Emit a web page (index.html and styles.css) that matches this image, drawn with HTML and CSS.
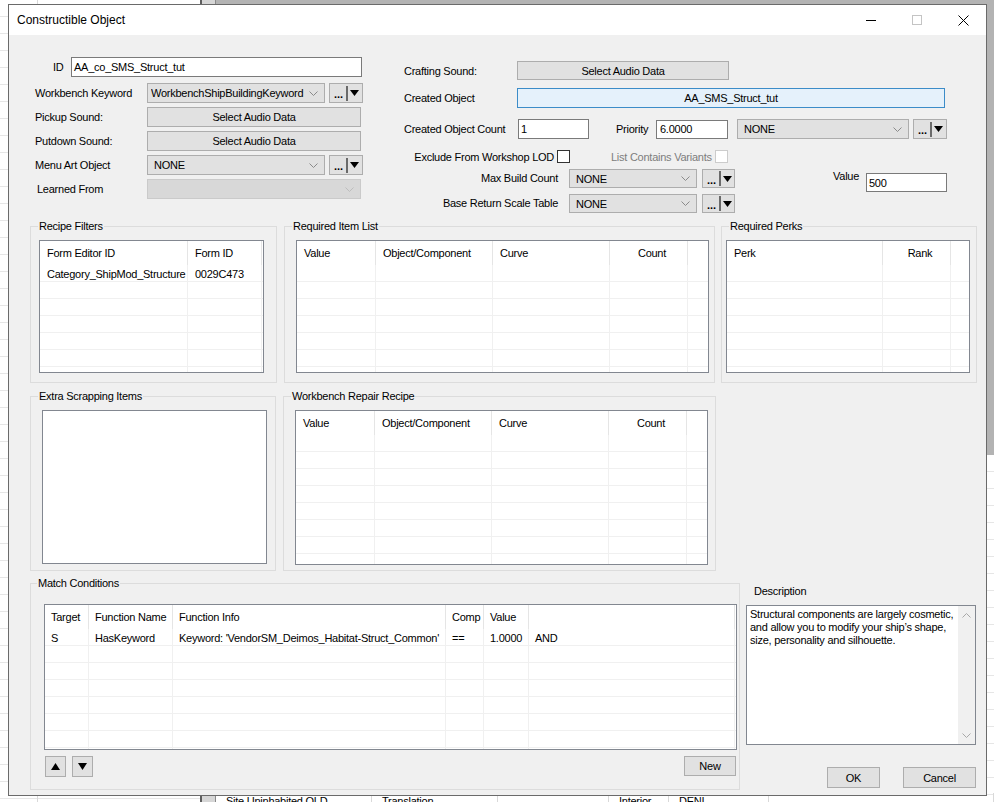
FILE: index.html
```html
<!DOCTYPE html>
<html>
<head>
<meta charset="utf-8">
<title>Constructible Object</title>
<link rel="stylesheet" href="styles.css">
</head>
<body>
<div class="desk">
  <div class="bg-left"></div>
  <div class="bg-split"></div>
  <div class="bg-main">
    <div class="bg-gray"></div>
    <div class="bg-list">
      <div class="bg-row"><span>Site Uninhabited OLD</span><span>Translation</span><span></span><span>Interior</span><span>DENI</span><span></span></div>
    </div>
  </div>

  <div class="window">
    <div class="titlebar">
      <div class="title">Constructible Object</div>
      <div class="tb-btn"><span class="tb-min"></span></div>
      <div class="tb-btn"><span class="tb-max"></span></div>
      <div class="tb-btn"><svg width="11" height="11" viewBox="0 0 11 11"><path d="M0.5 0.5L10.5 10.5M10.5 0.5L0.5 10.5" stroke="#000" stroke-width="1" fill="none"/></svg></div>
    </div>

    <div class="client">
      <div class="top">
        <div class="col-left">
          <div class="row-id"><span class="lbl-id">ID</span><div class="input w-id">AA_co_SMS_Struct_tut</div></div>
          <div class="frows">
            <div class="frow"><span class="flabel">Workbench Keyword</span>
              <div class="combo w-combo-l pl-s"><span class="ctext">WorkbenchShipBuildingKeyword</span><svg class="chev" width="9" height="5" viewBox="0 0 9 5"><polyline points="0.5,0.5 4.5,4.5 8.5,0.5" fill="none" stroke="#8a8a8a"/></svg></div>
              <div class="dots w-dots-l"><b>...</b><span class="bar"></span><svg width="9" height="6" viewBox="0 0 9 6"><polygon points="0,0 9,0 4.5,6" fill="#000"/></svg></div>
            </div>
            <div class="frow"><span class="flabel">Pickup Sound:</span><div class="btn w-btn-l">Select Audio Data</div></div>
            <div class="frow"><span class="flabel">Putdown Sound:</span><div class="btn w-btn-l">Select Audio Data</div></div>
            <div class="frow"><span class="flabel">Menu Art Object</span>
              <div class="combo w-combo-l"><span class="ctext">NONE</span><svg class="chev" width="9" height="5" viewBox="0 0 9 5"><polyline points="0.5,0.5 4.5,4.5 8.5,0.5" fill="none" stroke="#8a8a8a"/></svg></div>
              <div class="dots w-dots-l"><b>...</b><span class="bar"></span><svg width="9" height="6" viewBox="0 0 9 6"><polygon points="0,0 9,0 4.5,6" fill="#000"/></svg></div>
            </div>
            <div class="frow"><span class="flabel pl2">Learned From</span>
              <div class="combo disabled w-btn-l"><span class="ctext"></span><svg class="chev" width="9" height="5" viewBox="0 0 9 5"><polyline points="0.5,0.5 4.5,4.5 8.5,0.5" fill="none" stroke="#bdbdbd"/></svg></div>
            </div>
          </div>
        </div>

        <div class="col-right">
          <div class="r-craft"><span class="rlabel">Crafting Sound:</span><div class="btn w-craft">Select Audio Data</div></div>
          <div class="r-created"><span class="rlabel">Created Object</span><div class="created">AA_SMS_Struct_tut</div></div>
          <div class="r-count">
            <span class="rlabel w114">Created Object Count</span>
            <div class="input w-count">1</div>
            <span class="prio-lbl">Priority</span>
            <div class="input w-prio">6.0000</div>
            <div class="combo w-combo-p"><span class="ctext">NONE</span><svg class="chev" width="9" height="5" viewBox="0 0 9 5"><polyline points="0.5,0.5 4.5,4.5 8.5,0.5" fill="none" stroke="#8a8a8a"/></svg></div>
            <div class="dots w-dots-l"><b>...</b><span class="bar"></span><svg width="9" height="6" viewBox="0 0 9 6"><polygon points="0,0 9,0 4.5,6" fill="#000"/></svg></div>
          </div>
          <div class="r-excl">
            <span class="excl-lbl">Exclude From Workshop LOD</span><span class="check"></span>
            <span class="var-lbl">List Contains Variants</span><span class="check dis"></span>
          </div>
          <div class="r-max">
            <span class="mlabel">Max Build Count</span>
            <div class="combo w-combo-s"><span class="ctext">NONE</span><svg class="chev" width="9" height="5" viewBox="0 0 9 5"><polyline points="0.5,0.5 4.5,4.5 8.5,0.5" fill="none" stroke="#8a8a8a"/></svg></div>
            <div class="dots w-dots-s"><b>...</b><span class="bar"></span><svg width="9" height="6" viewBox="0 0 9 6"><polygon points="0,0 9,0 4.5,6" fill="#000"/></svg></div>
            <span class="val-lbl">Value</span>
            <div class="input w-val">500</div>
          </div>
          <div class="r-base">
            <span class="mlabel">Base Return Scale Table</span>
            <div class="combo w-combo-s"><span class="ctext">NONE</span><svg class="chev" width="9" height="5" viewBox="0 0 9 5"><polyline points="0.5,0.5 4.5,4.5 8.5,0.5" fill="none" stroke="#8a8a8a"/></svg></div>
            <div class="dots w-dots-s"><b>...</b><span class="bar"></span><svg width="9" height="6" viewBox="0 0 9 6"><polygon points="0,0 9,0 4.5,6" fill="#000"/></svg></div>
          </div>
        </div>
      </div>

      <div class="g1">
        <fieldset class="grp fs-recipe">
          <legend>Recipe Filters</legend>
          <div class="lv lv-recipe">
            <div class="h c-recipe"><span>Form Editor ID</span><span>Form ID</span><span></span></div>
            <div class="r c-recipe"><span>Category_ShipMod_Structure</span><span>0029C473</span><span></span></div>
            <div class="r c-recipe"><span></span><span></span><span></span></div>
            <div class="r c-recipe"><span></span><span></span><span></span></div>
            <div class="r c-recipe"><span></span><span></span><span></span></div>
            <div class="r c-recipe"><span></span><span></span><span></span></div>
            <div class="r c-recipe"><span></span><span></span><span></span></div>
            <div class="r c-recipe"><span></span><span></span><span></span></div>
          </div>
        </fieldset>
        <fieldset class="grp fs-items">
          <legend>Required Item List</legend>
          <div class="lv lv-items">
            <div class="h c-items"><span>Value</span><span>Object/Component</span><span>Curve</span><span class="center">Count</span><span></span></div>
            <div class="r c-items"><span></span><span></span><span></span><span></span><span></span></div>
            <div class="r c-items"><span></span><span></span><span></span><span></span><span></span></div>
            <div class="r c-items"><span></span><span></span><span></span><span></span><span></span></div>
            <div class="r c-items"><span></span><span></span><span></span><span></span><span></span></div>
            <div class="r c-items"><span></span><span></span><span></span><span></span><span></span></div>
            <div class="r c-items"><span></span><span></span><span></span><span></span><span></span></div>
            <div class="r c-items"><span></span><span></span><span></span><span></span><span></span></div>
          </div>
        </fieldset>
        <fieldset class="grp fs-perks">
          <legend>Required Perks</legend>
          <div class="lv lv-perks">
            <div class="h c-perks"><span>Perk</span><span class="center">Rank</span><span></span></div>
            <div class="r c-perks"><span></span><span></span><span></span></div>
            <div class="r c-perks"><span></span><span></span><span></span></div>
            <div class="r c-perks"><span></span><span></span><span></span></div>
            <div class="r c-perks"><span></span><span></span><span></span></div>
            <div class="r c-perks"><span></span><span></span><span></span></div>
            <div class="r c-perks"><span></span><span></span><span></span></div>
            <div class="r c-perks"><span></span><span></span><span></span></div>
          </div>
        </fieldset>
      </div>

      <div class="g2">
        <fieldset class="grp fs-extra">
          <legend>Extra Scrapping Items</legend>
          <div class="lv lv-extra"></div>
        </fieldset>
        <fieldset class="grp fs-repair">
          <legend>Workbench Repair Recipe</legend>
          <div class="lv lv-repair">
            <div class="h c-items"><span>Value</span><span>Object/Component</span><span>Curve</span><span class="center">Count</span><span></span></div>
            <div class="r c-items"><span></span><span></span><span></span><span></span><span></span></div>
            <div class="r c-items"><span></span><span></span><span></span><span></span><span></span></div>
            <div class="r c-items"><span></span><span></span><span></span><span></span><span></span></div>
            <div class="r c-items"><span></span><span></span><span></span><span></span><span></span></div>
            <div class="r c-items"><span></span><span></span><span></span><span></span><span></span></div>
            <div class="r c-items"><span></span><span></span><span></span><span></span><span></span></div>
            <div class="r c-items"><span></span><span></span><span></span><span></span><span></span></div>
            <div class="r c-items"><span></span><span></span><span></span><span></span><span></span></div>
          </div>
        </fieldset>
      </div>

      <div class="g3">
        <fieldset class="grp fs-match">
          <legend>Match Conditions</legend>
          <div class="lv lv-match">
            <div class="h c-match"><span>Target</span><span>Function Name</span><span>Function Info</span><span>Comp</span><span>Value</span><span></span><span></span></div>
            <div class="r c-match"><span>S</span><span>HasKeyword</span><span>Keyword: 'VendorSM_Deimos_Habitat-Struct_Common'</span><span>==</span><span>1.0000</span><span>AND</span><span></span></div>
            <div class="r c-match"><span></span><span></span><span></span><span></span><span></span><span></span><span></span></div>
            <div class="r c-match"><span></span><span></span><span></span><span></span><span></span><span></span><span></span></div>
            <div class="r c-match"><span></span><span></span><span></span><span></span><span></span><span></span><span></span></div>
            <div class="r c-match"><span></span><span></span><span></span><span></span><span></span><span></span><span></span></div>
            <div class="r c-match"><span></span><span></span><span></span><span></span><span></span><span></span><span></span></div>
            <div class="r c-match"><span></span><span></span><span></span><span></span><span></span><span></span><span></span></div>
            <div class="r c-match"><span></span><span></span><span></span><span></span><span></span><span></span><span></span></div>
          </div>
          <div class="match-btns">
            <div class="btn sq"><svg width="9" height="7" viewBox="0 0 9 7"><polygon points="4.5,0 9,7 0,7" fill="#000"/></svg></div>
            <div class="btn sq sq2"><svg width="9" height="7" viewBox="0 0 9 7"><polygon points="0,0 9,0 4.5,7" fill="#000"/></svg></div>
            <div class="btn new-btn">New</div>
          </div>
        </fieldset>
        <div class="desc-col">
          <div class="desc-lbl">Description</div>
          <div class="desc-box">
            <div class="desc-text">Structural components are largely cosmetic,<br>and allow you to modify your ship’s shape,<br>size, personality and silhouette.</div>
            <div class="vscroll">
              <svg width="9" height="5" viewBox="0 0 9 5"><polyline points="0.5,4.5 4.5,0.5 8.5,4.5" fill="none" stroke="#a8a8a8"/></svg>
              <svg width="9" height="5" viewBox="0 0 9 5"><polyline points="0.5,0.5 4.5,4.5 8.5,0.5" fill="none" stroke="#a8a8a8"/></svg>
            </div>
          </div>
          <div class="dlg-btns">
            <div class="btn ok-btn">OK</div>
            <div class="btn cancel-btn">Cancel</div>
          </div>
        </div>
      </div>
    </div>
  </div>
</div>
</body>
</html>
```

FILE: styles.css
```css
* { box-sizing: border-box; }
html, body { margin: 0; padding: 0; }
body {
  width: 994px;
  height: 802px;
  overflow: hidden;
  font-family: "Liberation Sans", Arial, sans-serif;
  font-size: 11px;
  letter-spacing: -0.25px;
  color: #000;
}

/* ---------- background application ---------- */
.desk {
  position: relative;
  width: 994px;
  height: 802px;
  display: grid;
  grid-template-columns: 200px 16px 1fr;
  background: #fff;
  overflow: hidden;
}
.bg-left {
  background-image:
    linear-gradient(to right, transparent 37px, #d9d9d9 37px, #d9d9d9 38px, transparent 38px),
    repeating-linear-gradient(to bottom, transparent 0, transparent 16px, #e6e6e6 16px, #e6e6e6 17px);
}
.bg-split {
  background: #d6d6d6;
  border-left: 2px solid #5e5e5e;
  border-right: 1px solid #8a8a8a;
}
.bg-main { display: flex; flex-direction: column; }
.bg-gray { height: 455px; background: #b3b3b3; }
.bg-list {
  flex: 1;
  display: flex;
  flex-direction: column;
  justify-content: flex-end;
  background-image: repeating-linear-gradient(to bottom, transparent 0, transparent 16px, #e6e6e6 16px, #e6e6e6 17px);
}
.bg-row {
  display: grid;
  grid-template-columns: 156px 126px 111px 60px 100px 1fr;
  height: 17px;
  margin-bottom: -8px;
  line-height: 17px;
}
.bg-row span { padding-left: 10px; border-right: 1px solid #d9d9d9; white-space: nowrap; overflow: hidden; }

/* ---------- window ---------- */
.window {
  position: absolute;
  left: 8px;
  top: 4px;
  width: 979px;
  height: 792px;
  border: 1px solid #6a6a6a;
  background: #f0f0f0;
  display: flex;
  flex-direction: column;
}
.titlebar {
  height: 30px;
  background: #fff;
  display: flex;
  align-items: center;
  flex-shrink: 0;
}
.title { flex: 1; padding-left: 8px; font-size: 12px; letter-spacing: 0; }
.tb-btn {
  width: 46px;
  height: 30px;
  display: flex;
  align-items: center;
  justify-content: center;
}
.tb-min { width: 10px; height: 1px; background: #000; }
.tb-max { width: 10px; height: 10px; border: 1px solid #c4c4c4; }

.client { flex: 1; padding-left: 21px; }

/* ---------- generic controls ---------- */
.input {
  height: 20px;
  background: #fff;
  border: 1px solid #7a7a7a;
  padding-left: 2px;
  line-height: 18px;
  white-space: nowrap;
  overflow: hidden;
}
.btn {
  height: 20px;
  background: #e1e1e1;
  border: 1px solid #adadad;
  display: flex;
  align-items: center;
  justify-content: center;
  white-space: nowrap;
}
.combo {
  height: 20px;
  background: #e1e1e1;
  border: 1px solid #adadad;
  display: flex;
  align-items: center;
  padding: 0 6px 0 6px;
}
.combo.pl-s { padding-left: 3px; }
.combo .ctext { flex: 1; white-space: nowrap; overflow: hidden; }
.combo .chev { flex-shrink: 0; margin-left: 3px; }
.combo.disabled { background: #d8d8d8; border-color: #cacaca; }
.dots {
  height: 20px;
  margin-left: 4px;
  background: #e1e1e1;
  border: 1px solid #adadad;
  display: flex;
  align-items: center;
  padding-left: 4px;
}
.dots b { font-weight: bold; letter-spacing: 0; line-height: 10px; margin-top: 2px; }
.dots .bar { width: 2px; height: 15px; background: #6a6a6a; margin: 0 2px 0 3px; }
.check { width: 13px; height: 13px; background: #fff; border: 1px solid #333; flex-shrink: 0; }
.check.dis { border-color: #cccccc; }

/* ---------- top section ---------- */
.top { height: 185px; display: flex; align-items: flex-start; }
.col-left { width: 369px; margin-left: 5px; margin-top: 22px; }
.row-id { display: flex; height: 20px; }
.lbl-id { width: 18px; margin-left: 18px; line-height: 20px; }
.w-id { width: 291px; }
.frows { margin-top: 6px; display: flex; flex-direction: column; gap: 4px; }
.frow { display: flex; align-items: center; height: 20px; }
.flabel { width: 112px; white-space: nowrap; }
.flabel.pl2 { padding-left: 2px; }
.w-combo-l { width: 178px; }
.w-dots-l { width: 34px; }
.w-btn-l { width: 214px; }

.col-right { width: 560px; margin-top: 26px; }
.rlabel { width: 113px; white-space: nowrap; }
.rlabel.w114 { width: 114px; }
.r-craft { display: flex; align-items: center; height: 19px; }
.w-craft { width: 212px; height: 19px; }
.r-created { display: flex; align-items: center; height: 20px; margin-top: 8px; }
.created {
  width: 428px;
  height: 20px;
  background: #e5f1fb;
  border: 1px solid #3c8cc8;
  display: flex;
  align-items: center;
  justify-content: center;
}
.r-count { display: flex; align-items: center; height: 20px; margin-top: 11px; }
.w-count { width: 71px; }
.prio-lbl { width: 40px; margin-left: 27px; }
.w-prio { width: 72px; height: 19px; line-height: 17px; padding-left: 3px; }
.w-combo-p { width: 172px; margin-left: 9px; }
.r-excl { display: flex; align-items: center; height: 13px; margin-top: 11px; }
.excl-lbl { width: 150px; text-align: right; white-space: nowrap; }
.r-excl .check { margin-left: 3px; }
.var-lbl { width: 101px; margin-left: 41px; color: #7d7d7d; white-space: nowrap; }
.r-max { display: flex; align-items: flex-start; margin-top: 6px; }
.mlabel { width: 154px; text-align: right; line-height: 19px; white-space: nowrap; }
.w-combo-s { width: 128px; height: 19px; margin-left: 11px; }
.w-dots-s { width: 33px; height: 19px; margin-left: 5px; }
.val-lbl { width: 33px; margin-left: 98px; line-height: 14px; }
.w-val { width: 81px; height: 19px; margin-top: 4px; line-height: 19px; }
.r-base { display: flex; align-items: flex-start; margin-top: 2px; }

/* ---------- group boxes ---------- */
.grp {
  margin: 0;
  padding: 7px 0 0 0;
  min-width: 0;
  border: 1px solid #dcdcdc;
}
.grp legend {
  margin-left: 7px;
  padding: 0 1px;
  line-height: 13px;
  font-size: 11px;
}
.g1 { display: flex; align-items: flex-start; }
.g1 .grp { height: 163px; }
.fs-recipe { width: 247px; }
.fs-items { width: 431px; margin-left: 7px; }
.fs-perks { width: 256px; margin-left: 6px; }
.lv-recipe { width: 225px; height: 133px; margin-left: 8px; }
.lv-items { width: 413px; height: 133px; margin-left: 11px; }
.lv-perks { width: 244px; height: 133px; margin-left: 4px; }

.g2 { display: flex; align-items: flex-start; margin-top: 7px; }
.g2 .grp { height: 181px; }
.fs-extra { width: 246px; }
.fs-repair { width: 433px; margin-left: 7px; }
.lv-extra { width: 225px; height: 154px; margin-left: 11px; }
.lv-repair { width: 413px; height: 155px; margin-left: 11px; }

.g3 { display: flex; align-items: flex-start; margin-top: 6px; }
.fs-match { width: 710px; height: 213px; padding-top: 14px; }
.fs-match legend { margin-left: 6px; }
.lv-match { width: 693px; height: 146px; margin-left: 13px; }
.match-btns { display: flex; width: 693px; margin-top: 6px; margin-left: 13px; }
.sq { width: 21px; height: 21px; margin-left: 1px; }
.sq2 { margin-left: 6px; }
.new-btn { width: 52px; margin-left: auto; margin-right: 1px; }

.desc-col { width: 230px; margin-left: 6px; }
.desc-lbl { margin-top: 8px; margin-left: 8px; line-height: 13px; }
.desc-box {
  margin-top: 7px;
  height: 140px;
  background: #fff;
  border: 1px solid #828790;
  display: flex;
}
.desc-text { flex: 1; padding: 2px 0 0 3px; line-height: 13px; white-space: nowrap; overflow: hidden; }
.vscroll {
  width: 17px;
  flex-shrink: 0;
  background: #f0f0f0;
  display: flex;
  flex-direction: column;
  justify-content: space-between;
  align-items: center;
  padding: 7px 0 6px;
}
.dlg-btns { display: flex; justify-content: flex-end; gap: 23px; margin-top: 22px; }
.ok-btn { width: 53px; height: 21px; }
.cancel-btn { width: 73px; height: 21px; }

/* ---------- list views ---------- */
.lv { border: 1px solid #828790; background: #fff; overflow: hidden; }
.lv .h, .lv .r { display: grid; }
.lv .h { height: 24px; }
.lv .h > span {
  line-height: 24px;
  padding-left: 7px;
  border-right: 1px solid #e5e5e5;
  white-space: nowrap;
  overflow: hidden;
}
.lv .r { height: 17px; }
.lv .r > span {
  line-height: 18px;
  padding-left: 7px;
  border-right: 1px solid #f0f0f0;
  border-bottom: 1px solid #f0f0f0;
  white-space: nowrap;
  overflow: hidden;
}
.lv .h > span:last-child, .lv .r > span:last-child { border-right: none; }
.lv .center { text-align: center; padding-left: 0; }
.c-recipe { grid-template-columns: 148px 74px 1fr; }
.c-items { grid-template-columns: 79px 117px 117px 78px 1fr; }
.c-perks { grid-template-columns: 156px 68px 1fr; }
.c-match { grid-template-columns: 44px 84px 273px 38px 45px 206px 1fr; }
.c-match > span { padding-left: 6px !important; }
```
